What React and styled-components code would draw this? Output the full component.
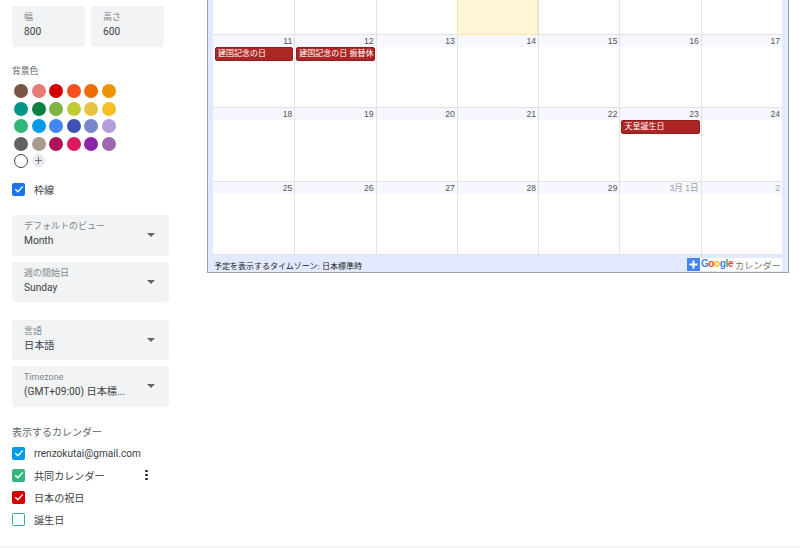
import React from "react";
import styled, { createGlobalStyle } from "styled-components";

const Global = createGlobalStyle`
  html, body { margin: 0; padding: 0; background: #fff; }
  body { width: 800px; height: 548px; overflow: hidden; font-family: Roboto, "Noto Sans CJK JP", sans-serif; }
`;
const Page = styled.div`
  width: 800px; height: 546px; display: flex; align-items: flex-start;
  border-bottom: 2px solid #f1f3f4; box-sizing: content-box; overflow: hidden;
`;
const Side = styled.aside`
  width: 207px; flex: none; padding: 6px 0 0 12px; box-sizing: border-box;
  display: flex; flex-direction: column; align-items: flex-start;
`;
const Sizes = styled.div`display: flex; gap: 6px;`;
const SizeField = styled.div`
  width: 73px; height: 41px; background: #f1f3f4; border-radius: 3px; padding: 5px 0 0 12px; box-sizing: border-box;
`;
const FieldLabel = styled.div`font-size: 9px; line-height: 12px; color: #80868b; white-space: nowrap;`;
const FieldValue = styled.div`font-size: 10.2px; line-height: 16px; margin-top: 1px; color: #3c4043; white-space: nowrap;`;
const SectionLabel = styled.div`font-size: ${p => p.$size}px; line-height: 14px; color: #5f6368; margin-top: ${p => p.$top}px;`;
const Swatches = styled.div`
  display: grid; grid-template-columns: repeat(6, 14px); grid-auto-rows: 14px; gap: 3.5px; margin: 6px 0 0 2px;
`;
const Swatch = styled.div`
  width: 14px; height: 14px; border-radius: 50%; background: ${p => p.$c};
`;
const EmptySwatch = styled.div`
  width: 14px; height: 14px; border-radius: 50%; border: 1.3px solid #3c4043; box-sizing: border-box; background: #fff;
`;
const AddSwatch = styled.div`
  width: 13px; height: 13px; border-radius: 50%; background: #e8eaed; color: #70757a;
  display: flex; align-items: center; justify-content: center; margin-left: 0.5px;
`;
const CheckRow = styled.div`
  display: flex; align-items: center; gap: 9px; height: ${p => p.$h || 22}px; margin-top: ${p => p.$top || 0}px;
`;
const Box = styled.div`
  width: 13px; height: 13px; border-radius: 1.5px; box-sizing: border-box; flex: none;
  background: ${p => p.$on ? p.$c : "#fff"}; border: 1.5px solid ${p => p.$c};
  display: flex; align-items: center; justify-content: center;
`;
const CheckText = styled.span`font-size: 10.1px; color: #3c4043; white-space: nowrap; width: ${p => p.$w || "auto"};`;
const Select = styled.div`
  width: 157px; height: 40.5px; background: #f1f3f4; border-radius: 3px; padding: 5px 0 0 12px; box-sizing: border-box;
  position: relative; margin-top: ${p => p.$top}px;
`;
const Arrow = styled.div`
  position: absolute; right: 14px; top: 18px; width: 0; height: 0;
  border-left: 4px solid transparent; border-right: 4px solid transparent; border-top: 4px solid #5f6368;
`;
const Dots = styled.div`
  display: flex; flex-direction: column; gap: 1.5px;
`;
const Dot = styled.div`width: 2.5px; height: 2.5px; background: #202124; border-radius: 50%;`;

const Frame = styled.section`
  width: 582px; height: 273px; flex: none; box-sizing: border-box;
  border-left: 1px solid #a2a2a2; border-right: 1px solid #a2a2a2; border-bottom: 1px solid #a2a2a2;
  background: #e3e9ff; padding: 0 6px 0 5px; display: flex; flex-direction: column;
`;
const Grid = styled.div`
  display: flex; flex-direction: column; background: #fff; height: 254px; flex: none;
`;
const Week = styled.div`
  display: grid; grid-template-columns: repeat(7, 1fr); height: ${p => p.$h}px; flex: none;
  border-bottom: 1px solid #e2e2e2;
`;
const Cell = styled.div`
  position: relative; border-left: 1px solid #e2e2e2; min-width: 0; display: flex; flex-direction: column;
  &:first-child { border-left: none; }
`;
const TodayCell = styled(Cell)`
  background: #fff4d6; border: 1px solid #ffe5a3; border-top: none; margin-bottom: -1px;
`;
const DateHead = styled.div`
  height: 12px; line-height: 12px; text-align: right; background: #f6f7ff; padding-right: 2px;
  font-family: "Liberation Sans", "Noto Sans CJK JP", sans-serif; font-size: 8.6px;
  color: ${p => p.$out ? "#a0a0a0" : "#555"};
  white-space: nowrap;
`;
const Event = styled.div`
  margin: 0 1px 0 1px; height: 12px; line-height: 12px; background: #ad2626; border: 1px solid #8f1f1f; border-radius: 2px;
  color: #fff; font-size: 8px; padding-left: 2px; white-space: nowrap; overflow: hidden;
  font-family: "Liberation Sans", "Noto Sans CJK JP", sans-serif;
  ${Cell}:first-child & { margin-left: 2px; }
`;
const Foot = styled.div`
  flex: 1; display: flex; align-items: center; justify-content: space-between; padding: 1px 0 0 1px;
`;
const Zone = styled.span`font-size: 8px; color: #222; font-family: "Liberation Sans", "Noto Sans CJK JP", sans-serif; margin-top: 4px;`;
const Brand = styled.div`display: flex; align-items: center; height: 13px; background: #fff; margin-top: 2px; padding-right: 1px;`;
const Plus = styled.div`
  width: 13px; height: 13px; background: #4285f4; color: #fff; display: flex; align-items: center; justify-content: center;
`;
const Logo = styled.span`font-size: 10px; font-weight: 700; font-family: "Liberation Sans", sans-serif; letter-spacing: -0.4px; margin: -3px 2px 0 1px; display: flex;`;
const L = styled.span`color: ${p => p.$c};`;
const BrandText = styled.span`font-size: 9.2px; color: #777; white-space: nowrap;`;

const colors = ["#795548","#e67c73","#d50000","#f4511e","#ef6c00","#f09300",
"#009688","#0b8043","#7cb342","#c0ca33","#e4c441","#f6bf26",
"#33b679","#039be5","#4285f4","#3f51b5","#7986cb","#b39ddb",
"#616161","#a79b8e","#ad1457","#d81b60","#8e24aa","#9e69af"];

const Tick = () => (
  <svg width="10" height="10" viewBox="0 0 10 10"><path d="M1.2 5.2 L3.9 7.8 L8.8 2.4" fill="none" stroke="#fff" strokeWidth="1.4"/></svg>
);

const weeks = [
  { h: 34, days: [{},{},{},{today:true},{},{},{}], blank: true },
  { h: 72, days: [{d:"11",e:"建国記念の日"},{d:"12",e:"建国記念の日 振替休"},{d:"13"},{d:"14"},{d:"15"},{d:"16"},{d:"17"}] },
  { h: 73, days: [{d:"18"},{d:"19"},{d:"20"},{d:"21"},{d:"22"},{d:"23",e:"天皇誕生日"},{d:"24"}] },
  { h: 72, days: [{d:"25"},{d:"26"},{d:"27"},{d:"28"},{d:"29"},{d:"3月 1日",out:true},{d:"2",out:true}] },
];

export default function App() {
  return (
    <Page>
      <Global />
      <Side>
        <Sizes>
          <SizeField><FieldLabel>幅</FieldLabel><FieldValue>800</FieldValue></SizeField>
          <SizeField><FieldLabel>高さ</FieldLabel><FieldValue>600</FieldValue></SizeField>
        </Sizes>
        <SectionLabel $top={17} $size={8.8}>背景色</SectionLabel>
        <Swatches>
          {colors.map(c => <Swatch key={c} $c={c} />)}
          <EmptySwatch />
          <AddSwatch>
            <svg width="9" height="9" viewBox="0 0 9 9"><path d="M4.5 1v7M1 4.500h7" stroke="#70757a" strokeWidth="1"/></svg>
          </AddSwatch>
        </Swatches>
        <CheckRow $top={10}><Box $on $c="#1a73e8"><Tick /></Box><CheckText>枠線</CheckText></CheckRow>
        <Select $top={15}><FieldLabel>デフォルトのビュー</FieldLabel><FieldValue>Month</FieldValue><Arrow /></Select>
        <Select $top={6}><FieldLabel>週の開始日</FieldLabel><FieldValue>Sunday</FieldValue><Arrow /></Select>
        <Select $top={17.5}><FieldLabel>言語</FieldLabel><FieldValue>日本語</FieldValue><Arrow /></Select>
        <Select $top={6}><FieldLabel>Timezone</FieldLabel><FieldValue>(GMT+09:00) 日本標...</FieldValue><Arrow /></Select>
        <SectionLabel $top={19.5} $size={10}>表示するカレンダー</SectionLabel>
        <CheckRow $top={2}><Box $on $c="#039be5"><Tick /></Box><CheckText>rrenzokutai@gmail.com</CheckText></CheckRow>
        <CheckRow><Box $on $c="#33b679"><Tick /></Box><CheckText $w="102px">共同カレンダー</CheckText><Dots><Dot /><Dot /><Dot /></Dots></CheckRow>
        <CheckRow><Box $on $c="#d50000"><Tick /></Box><CheckText>日本の祝日</CheckText></CheckRow>
        <CheckRow><Box $c="#33b679" /><CheckText>誕生日</CheckText></CheckRow>
      </Side>
      <Frame>
        <Grid>
          {weeks.map((w, i) => (
            <Week key={i} $h={w.h}>
              {w.days.map((c, j) => {
                const Day = c.today ? TodayCell : Cell;
                return (
                  <Day key={j}>
                    {!w.blank && <DateHead $out={c.out}>{c.d}</DateHead>}
                    {c.e && <Event>{c.e}</Event>}
                  </Day>
                );
              })}
            </Week>
          ))}
        </Grid>
        <Foot>
          <Zone>予定を表示するタイムゾーン: 日本標準時</Zone>
          <Brand>
            <Plus><svg width="9" height="9" viewBox="0 0 9 9"><path d="M4.500 .5v8M.5 4.500h8" stroke="#fff" strokeWidth="2"/></svg></Plus>
            <Logo><L $c="#4285f4">G</L><L $c="#ea4335">o</L><L $c="#fbbc05">o</L><L $c="#4285f4">g</L><L $c="#34a853">l</L><L $c="#ea4335">e</L></Logo>
            <BrandText>カレンダー</BrandText>
          </Brand>
        </Foot>
      </Frame>
    </Page>
  );
}
